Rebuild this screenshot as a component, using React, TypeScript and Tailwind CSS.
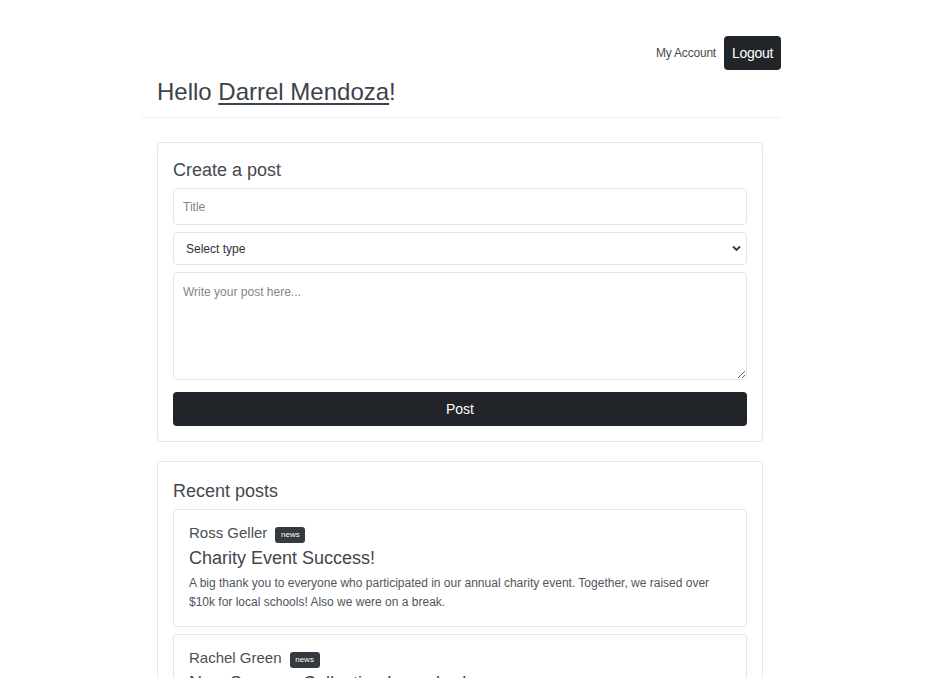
import React from "react";

type Post = { author: string; type: string; title: string; body: string };

const posts: Post[] = [
  {
    author: "Ross Geller",
    type: "news",
    title: "Charity Event Success!",
    body: "A big thank you to everyone who participated in our annual charity event. Together, we raised over $10k for local schools! Also we were on a break.",
  },
  {
    author: "Rachel Green",
    type: "news",
    title: "New Summer Collection Launched",
    body: "Check out the brand new summer collection, available in stores and online starting this week.",
  },
];

function PostCard({ post }: { post: Post }) {
  return (
    <div className="border border-[#e3e5e8] rounded-[4px] px-[15px] pt-[14px] pb-[14px]">
      <div className="flex items-center gap-[8px] h-[19px]">
        <span className="text-[15px] text-[#4a5057]">{post.author}</span>
        <span className="bg-[#343a40] text-white text-[8px] leading-none rounded-[3px] w-[30px] h-[16px] flex items-center justify-center mt-[3px]">
          {post.type}
        </span>
      </div>
      <h3 className="text-[18px] leading-[22px] text-[#3f454c] mt-[4px]">{post.title}</h3>
      <p className="text-[12px] leading-[19px] text-[#50565d] mt-[5px] pr-[8px]">{post.body}</p>
    </div>
  );
}

export default function App() {
  return (
    <div className="min-h-screen bg-white font-['Liberation_Sans',Arial,sans-serif]">
      <div className="ml-[141px] w-[640px]">
        <nav className="flex justify-end items-center gap-[8px] pt-[36px]">
          <a className="text-[12px] text-[#454b52] tracking-[-0.2px]">My Account</a>
          <button className="bg-[#212529] text-white text-[14px] tracking-[-0.3px] rounded-[4px] w-[57px] h-[34px]">
            Logout
          </button>
        </nav>
        <div className="border-b border-[#eef0f2] pb-[11px]">
          <h1 className="text-[24px] leading-[29px] text-[#3c434b] pl-[16px] mt-[7px]">
            Hello <a className="underline underline-offset-[3px] decoration-[1.5px]">Darrel Mendoza</a>!
          </h1>
        </div>

        <div className="ml-[16px] w-[606px] mt-[24px] border border-[#e6e8eb] rounded-[4px] px-[15px] pt-[16px] pb-[15px]">
          <h2 className="text-[18px] leading-[22px] text-[#434950] mb-[7px]">Create a post</h2>
          <div className="flex flex-col gap-[7px]">
            <input
              placeholder="Title"
              className="h-[37px] border border-[#e3e5e8] rounded-[4px] px-[9px] text-[12px] text-[#212529] placeholder:text-[#80868c] outline-none"
            />
            <div className="relative">
              <select className="appearance-none w-full h-[33px] border border-[#e3e5e8] rounded-[4px] px-[12px] text-[12px] text-[#2d3238] bg-white outline-none">
                <option>Select type</option>
              </select>
              <svg className="absolute right-[6px] top-[13px]" width="9" height="7" viewBox="0 0 9 7">
                <path d="M1 1.5 L4.5 5 L8 1.5" stroke="#343a40" strokeWidth="1.8" fill="none" />
              </svg>
            </div>
            <textarea
              placeholder="Write your post here..."
              className="h-[108px] border border-[#e3e5e8] rounded-[4px] px-[9px] py-[10px] text-[12px] text-[#212529] placeholder:text-[#80868c] outline-none resize-y"
            />
          </div>
          <button className="mt-[12px] w-full h-[34px] bg-[#212529] text-white text-[14px] rounded-[4px]">
            Post
          </button>
        </div>

        <div className="ml-[16px] w-[606px] mt-[19px] border border-[#e6e8eb] rounded-[4px] px-[15px] pt-[18px] pb-[15px]">
          <h2 className="text-[18px] leading-[22px] text-[#434950] mb-[7px]">Recent posts</h2>
          <div className="flex flex-col gap-[7px]">
            {posts.map((p) => (
              <PostCard key={p.author} post={p} />
            ))}
          </div>
        </div>
      </div>
    </div>
  );
}
